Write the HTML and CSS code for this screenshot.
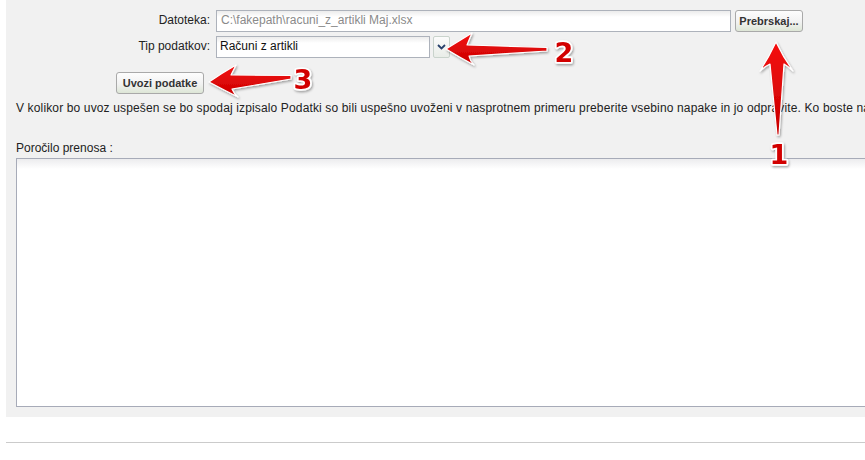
FILE: index.html
```html
<!DOCTYPE html>
<html>
	<head>
		<meta charset="UTF-8">
		<title>Uvoz podatkov</title>
		<link rel="stylesheet" href="styles.css">
	</head>
	<body>
		<div class="panel">
			<div class="form">
				<label>Datoteka:</label>
				<div class="file">
					<div class="field path">C:\fakepath\racuni_z_artikli Maj.xlsx</div>
					<div class="btn browse">Prebrskaj...</div>
				</div>
				<label>Tip podatkov:</label>
				<div class="pick">
					<div class="field combo">Računi z artikli</div>
					<div class="drop">
						<svg width="9" height="6" viewBox="0 0 9 6"><path d="M1,1 L4.5,4.5 L8,1" fill="none" stroke="#27406b" stroke-width="1.8"/></svg>
					</div>
				</div>
			</div>
			<div class="actions">
				<div class="btn import">Uvozi podatke</div>
			</div>
			<p class="note">V kolikor bo uvoz uspešen se bo spodaj izpisalo Podatki so bili uspešno uvoženi v nasprotnem primeru preberite vsebino napake in jo odpravite. Ko boste napako odpravili ponovno uvozite podatke.</p>
			<p class="report-title">Poročilo prenosa :</p>
			<div class="report"></div>
		</div>
		<div class="rule"></div>

		<!-- oznake na sliki -->
		<svg class="marks" width="865" height="460">
			<defs>
				<linearGradient id="red" x1="0" y1="0" x2="0" y2="1">
					<stop offset="0" stop-color="#f51010"/>
					<stop offset="1" stop-color="#c80000"/>
				</linearGradient>
				<filter id="shade" x="-20%" y="-20%" width="140%" height="140%">
					<feDropShadow dx="1" dy="1.5" stdDeviation="1.2" flood-color="#000" flood-opacity="0.35"/>
				</filter>
			</defs>
			<g class="arrow" filter="url(#shade)">
				<path d="M776,42 Q783,57 793,71 Q788,66 784,64 L779,135 L777,135 L770,64 Q765,66 760,71 Q769,57 776,42 Z"/>
				<path d="M446,49 Q459,41 472,33 Q469,40 467,45 L547,47.5 L547,51 L469,56 Q470,61 474,65 Q459,57 446,49 Z"/>
				<path d="M209,82 Q222,73 236,65 Q233,71 231,75 L291,75.5 L291,79 L232,89 Q234,94 238,97 Q222,89 209,82 Z"/>
			</g>
			<g class="num" filter="url(#shade)">
				<text x="779" y="164">1</text>
				<text x="564" y="62">2</text>
				<text x="303" y="89">3</text>
			</g>
		</svg>
	</body>
</html>
```

FILE: styles.css
```css
*{
	margin: 0;
	padding: 0;
	box-sizing: border-box;
}
html,body{
	overflow: hidden;
}
body{
	background: #fff;
	font-family: "Liberation Sans", Arial, sans-serif;
	font-size: 12px;
	color: #222;
	width: 865px;
	height: 460px;
	position: relative;
}
.panel{
	width: 1100px;
	margin-left: 6px;
	background: #f1f1f1;
	padding: 10px 0 10px 10px;
}
.form{
	display: grid;
	grid-template-columns: 204px auto;
	grid-auto-rows: 22px;
	column-gap: 6px;
	row-gap: 4px;
	margin-left: -10px;
}
.form label{
	text-align: right;
	line-height: 20px;
}
.file,.pick{
	display: flex;
	gap: 4px;
}
.field{
	height: 22px;
	border: 1px solid #adb2bb;
	background: linear-gradient(#ececec, #fff 6px);
	line-height: 19px;
	padding-left: 4px;
	white-space: nowrap;
}
.path{
	width: 515px;
	color: #8a8a8a;
}
.combo{
	width: 214px;
	color: #111;
	padding-left: 3px;
}
.drop{
	width: 17px;
	height: 22px;
	margin-left: -1px;
	border: 1px solid #c9d3cc;
	border-radius: 2px;
	background: linear-gradient(#fbfbfb, #e9ede8);
	display: flex;
	align-items: center;
	justify-content: center;
}
.btn{
	height: 22px;
	border: 1px solid #a9a9a9;
	border-radius: 3px;
	background: linear-gradient(#fdfdfd, #f2f2f2 55%, #dde6d6);
	font-weight: bold;
	font-size: 11px;
	color: #333;
	text-align: center;
	line-height: 20px;
	white-space: nowrap;
}
.browse{
	width: 68px;
}
.actions{
	margin-top: 14px;
	padding-left: 100px;
}
.import{
	width: 88px;
}
.note{
	margin-top: 7px;
	line-height: 14px;
	letter-spacing: 0.14px;
	white-space: nowrap;
}
.report-title{
	margin-top: 26px;
	line-height: 14px;
}
.report{
	margin-top: 3px;
	height: 249px;
	border: 1px solid #a7abb8;
	background: linear-gradient(#ececee, #fff 10px);
}
.rule{
	margin: 25px 0 0 6px;
	border-top: 1px solid #cbcbcb;
}
.marks{
	position: absolute;
	top: 0;
	left: 0;
	pointer-events: none;
}
.arrow path{
	fill: url(#red);
	stroke: #fff;
	stroke-width: 1.2;
	stroke-linejoin: round;
}
.num text{
	font-family: "DejaVu Sans", sans-serif;
	font-weight: bold;
	font-size: 27px;
	text-anchor: middle;
	fill: #d20000;
	stroke: #fff;
	stroke-width: 3.5;
	stroke-linejoin: round;
	paint-order: stroke;
}
```
